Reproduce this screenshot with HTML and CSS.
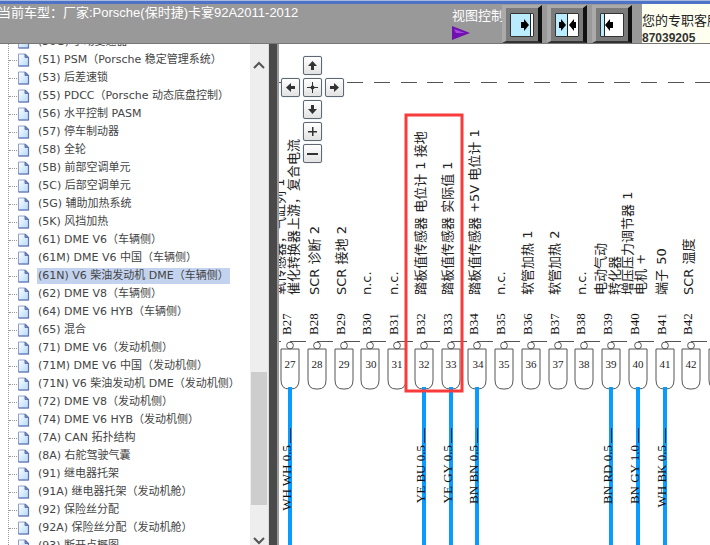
FILE: index.html
```html
<!DOCTYPE html>
<html lang="zh-CN">
<head>
<meta charset="utf-8">
<title>Porsche 92A 电路图</title>
<link rel="stylesheet" href="styles.css">
</head>
<body>
<svg class="defs" aria-hidden="true">
  <defs>
    <linearGradient id="paper" x1="0" y1="0" x2="1" y2="1">
      <stop offset="0" stop-color="#fff"/><stop offset="1" stop-color="#b4d8fa"/>
    </linearGradient>
    <symbol id="doc" viewBox="0 0 12 14">
      <path d="M1 1H8L11 4V13H1Z" fill="url(#paper)" stroke="#8fa0cc"/>
      <path d="M11 4V13H1" fill="none" stroke="#5f73b3" stroke-width="1.2"/>
      <path d="M7.500 1V4.500H11Z" fill="#7184bd" stroke="#6175b0"/>
    </symbol>
    <g id="pin">
      <path d="M-9 349H9V380Q9 389 1 389H-1Q-9 389 -9 380Z"/>
      <circle cy="345.500" r="3.400"/>
      <path d="M0 341.500H16"/>
    </g>
    <g id="wire">
      <path d="M0 387V560" stroke="#0a9bff" stroke-width="4"/>
      <path d="M0.500 428V443" stroke="#10304a" stroke-width="1"/>
    </g>
  </defs>
</svg>
<div class="app">
  <header class="topbar">
    <div class="vehicle">当前车型：厂家:Porsche(保时捷)卡宴92A2011-2012</div>
    <div class="view">
      <span>视图控制</span>
      <svg class="play" viewBox="0 0 18 14"><path d="M0 0L18 7L0 14Z" fill="#7110b0"/><path d="M2 3L13 7L4 7Z" fill="#a24bdc"/></svg>
    </div>
    <div class="modes">
      <button type="button" class="mode" aria-label="右移"><svg viewBox="0 0 24 24"><path d="M0 0H24V24H0Z" fill="#fff"/><path d="M0 0H20V24H0Z" fill="#b9ecff"/><path d="M20.500 0V24" stroke="#222"/><path d="M11 9H14V6L19 12L14 18V15H11Z"/><path d="M.5 .5H23.500V23.500H.5Z" fill="none" stroke="#333"/></svg></button>
      <button type="button" class="mode" aria-label="居中"><svg viewBox="0 0 24 24"><path d="M0 0H24V24H0Z" fill="#fff"/><path d="M0 0H12V24H0Z" fill="#b9ecff"/><path d="M12.500 0V24" stroke="#222"/><path d="M4 9H6V6L11 12L6 18V15H4ZM21 9H19V6L14 12L19 18V15H21Z"/><path d="M.5 .5H23.500V23.500H.5Z" fill="none" stroke="#333"/></svg></button>
      <button type="button" class="mode" aria-label="左移"><svg viewBox="0 0 24 24"><path d="M0 0H24V24H0Z" fill="#fff"/><path d="M0 0H4V24H0Z" fill="#b9ecff"/><path d="M4.500 0V24" stroke="#222"/><path d="M13 9H10V6L5 12L10 18V15H13Z"/><path d="M.5 .5H23.500V23.500H.5Z" fill="none" stroke="#333"/></svg></button>
    </div>
    <div class="service"><span>您的专职客服</span><b>87039205</b></div>
  </header>
  <main class="work">
    <nav class="tree">
      <ul>
        <li><svg><use href="#doc"/></svg><a href="#">(50G) 手动变速器</a></li>
        <li><svg><use href="#doc"/></svg><a href="#">(51) PSM（Porsche 稳定管理系统）</a></li>
        <li><svg><use href="#doc"/></svg><a href="#">(53) 后差速锁</a></li>
        <li><svg><use href="#doc"/></svg><a href="#">(55) PDCC（Porsche 动态底盘控制）</a></li>
        <li><svg><use href="#doc"/></svg><a href="#">(56) 水平控制 PASM</a></li>
        <li><svg><use href="#doc"/></svg><a href="#">(57) 停车制动器</a></li>
        <li><svg><use href="#doc"/></svg><a href="#">(58) 全轮</a></li>
        <li><svg><use href="#doc"/></svg><a href="#">(5B) 前部空调单元</a></li>
        <li><svg><use href="#doc"/></svg><a href="#">(5C) 后部空调单元</a></li>
        <li><svg><use href="#doc"/></svg><a href="#">(5G) 辅助加热系统</a></li>
        <li><svg><use href="#doc"/></svg><a href="#">(5K) 风挡加热</a></li>
        <li><svg><use href="#doc"/></svg><a href="#">(61) DME V6（车辆侧）</a></li>
        <li><svg><use href="#doc"/></svg><a href="#">(61M) DME V6 中国（车辆侧）</a></li>
        <li><svg><use href="#doc"/></svg><a href="#" class="selected">(61N) V6 柴油发动机 DME（车辆侧）</a></li>
        <li><svg><use href="#doc"/></svg><a href="#">(62) DME V8（车辆侧）</a></li>
        <li><svg><use href="#doc"/></svg><a href="#">(64) DME V6 HYB（车辆侧）</a></li>
        <li><svg><use href="#doc"/></svg><a href="#">(65) 混合</a></li>
        <li><svg><use href="#doc"/></svg><a href="#">(71) DME V6（发动机侧）</a></li>
        <li><svg><use href="#doc"/></svg><a href="#">(71M) DME V6 中国（发动机侧）</a></li>
        <li><svg><use href="#doc"/></svg><a href="#">(71N) V6 柴油发动机 DME（发动机侧）</a></li>
        <li><svg><use href="#doc"/></svg><a href="#">(72) DME V8（发动机侧）</a></li>
        <li><svg><use href="#doc"/></svg><a href="#">(74) DME V6 HYB（发动机侧）</a></li>
        <li><svg><use href="#doc"/></svg><a href="#">(7A) CAN 拓扑结构</a></li>
        <li><svg><use href="#doc"/></svg><a href="#">(8A) 右舵驾驶气囊</a></li>
        <li><svg><use href="#doc"/></svg><a href="#">(91) 继电器托架</a></li>
        <li><svg><use href="#doc"/></svg><a href="#">(91A) 继电器托架（发动机舱）</a></li>
        <li><svg><use href="#doc"/></svg><a href="#">(92) 保险丝分配</a></li>
        <li><svg><use href="#doc"/></svg><a href="#">(92A) 保险丝分配（发动机舱）</a></li>
        <li><svg><use href="#doc"/></svg><a href="#">(93) 断开点概图</a></li>
      </ul>
    </nav>
    <div class="scroll" aria-hidden="true">
      <svg viewBox="0 0 12 8"><path d="M1 7L6 2L11 7"/></svg>
      <span class="before"></span><span class="thumb"></span><span class="after"></span>
      <svg viewBox="0 0 12 8"><path d="M1 1L6 6L11 1"/></svg>
    </div>
    <div class="splitter"></div>
    <section class="canvas">
      <svg class="diagram" viewBox="279 44 431 501" role="img" aria-label="电路图">
        <path d="M279 82.500H284M347 82.500h16m11 0h16m11 0h16m10 0h16m11 0h16m11 0h16m11 0h16m10 0h16m11 0h16m11 0h16m10 0h16m11 0h16m11 0h16m11 0h16" stroke="#555" fill="none"/>
        <g class="pins">
          <path d="M279 341.500H281"/>
          <use href="#pin" x="290"/><use href="#pin" x="317"/><use href="#pin" x="344"/><use href="#pin" x="370"/><use href="#pin" x="397"/><use href="#pin" x="424"/><use href="#pin" x="451"/><use href="#pin" x="477"/><use href="#pin" x="504"/><use href="#pin" x="531"/><use href="#pin" x="558"/><use href="#pin" x="584"/><use href="#pin" x="611"/><use href="#pin" x="638"/><use href="#pin" x="665"/><use href="#pin" x="691"/><use href="#pin" x="718"/>
        </g>
        <use href="#wire" x="290"/><use href="#wire" x="424"/><use href="#wire" x="451"/><use href="#wire" x="477"/><use href="#wire" x="611"/><use href="#wire" x="638"/><use href="#wire" x="665"/>
        <g class="numbers">
          <text x="290" y="368">27</text><text x="317" y="368">28</text><text x="344" y="368">29</text><text x="371" y="368">30</text><text x="397" y="368">31</text><text x="424" y="368">32</text><text x="451" y="368">33</text><text x="478" y="368">34</text><text x="504" y="368">35</text><text x="531" y="368">36</text><text x="558" y="368">37</text><text x="584" y="368">38</text><text x="611" y="368">39</text><text x="638" y="368">40</text><text x="665" y="368">41</text><text x="691" y="368">42</text>
        </g>
        <g class="codes" transform="rotate(-90)">
          <text x="-335" y="291">B27</text><text x="-335" y="318">B28</text><text x="-335" y="345">B29</text><text x="-335" y="371">B30</text><text x="-335" y="398">B31</text><text x="-335" y="425">B32</text><text x="-335" y="452">B33</text><text x="-335" y="478">B34</text><text x="-335" y="505">B35</text><text x="-335" y="532">B36</text><text x="-335" y="559">B37</text><text x="-335" y="585">B38</text><text x="-335" y="612">B39</text><text x="-335" y="639">B40</text><text x="-335" y="666">B41</text><text x="-335" y="692">B42</text>
        </g>
        <g class="labels" transform="rotate(-90)">
          <text x="-295" y="284">氧传感器，气缸列 1</text>
          <text x="-295" y="298">催化转换器上游，复合电流</text>
          <text x="-295" y="319">SCR 诊断 2</text>
          <text x="-295" y="346">SCR 接地 2</text>
          <text x="-295" y="371">n.c.</text>
          <text x="-295" y="398">n.c.</text>
          <text x="-295" y="425">踏板值传感器 电位计 1 接地</text>
          <text x="-295" y="452">踏板值传感器 实际值 1</text>
          <text x="-295" y="479">踏板值传感器 +5V 电位计 1</text>
          <text x="-295" y="505">n.c.</text>
          <text x="-295" y="532">软管加热 1</text>
          <text x="-295" y="559">软管加热 2</text>
          <text x="-295" y="586">n.c.</text>
          <text x="-295" y="605">电动气动</text>
          <text x="-295" y="619">转化器</text>
          <text x="-295" y="632">增压压力调节器 1</text>
          <text x="-295" y="645">电机 +</text>
          <text x="-295" y="666">端子 50</text>
          <text x="-295" y="693">SCR 温度</text>
        </g>
        <g class="codes gauges" transform="rotate(-90)">
          <text x="-445" y="291">WH WH 0.5</text><text x="-445" y="425">YE BU 0.5</text><text x="-445" y="452">YE GY 0.5</text><text x="-445" y="478">BN BN 0.5</text><text x="-445" y="612">BN RD 0.5</text><text x="-445" y="639">BN GY 1.0</text><text x="-445" y="666">WH BK 0.5</text>
        </g>
        <rect x="406" y="115" width="56" height="276" fill="none" stroke="#f83b3b" stroke-width="3"/>
      </svg>
      <div class="pan">
        <button type="button" class="up" aria-label="上"><svg viewBox="0 0 17 17"><path d="M8.500 4L13 9H10V13H7V9H4Z"/></svg></button>
        <button type="button" class="left" aria-label="左"><svg viewBox="0 0 17 17"><path d="M4 8.500L9 4V7H13V10H9V13Z"/></svg></button>
        <button type="button" class="mid" aria-label="居中"><svg viewBox="0 0 17 17"><path d="M8 3H9V8H14V9H9V14H8V9H3V8H8Z"/><circle cx="8.500" cy="8.500" r="2"/></svg></button>
        <button type="button" class="right" aria-label="右"><svg viewBox="0 0 17 17"><path d="M13 8.500L8 4V7H4V10H8V13Z"/></svg></button>
        <button type="button" class="down" aria-label="下"><svg viewBox="0 0 17 17"><path d="M8.500 13L13 8H10V4H7V8H4Z"/></svg></button>
        <button type="button" class="in" aria-label="放大"><svg viewBox="0 0 17 17"><path d="M8 4H9.500V8H13V9.500H9.500V13H8V9.500H4V8H8Z"/></svg></button>
        <button type="button" class="out" aria-label="缩小"><svg viewBox="0 0 17 17"><path d="M3 8H14V10H3Z"/></svg></button>
      </div>
    </section>
  </main>
</div>
</body>
</html>
```
FILE: styles.css
```css
* { box-sizing: border-box; }
body {
  margin: 0;
  background: #fff;
  color: #333;
  font-family: "DejaVu Sans", "Noto Sans CJK SC", sans-serif;
}
svg { display: block; }
button { padding: 0; font: inherit; }
.defs { position: absolute; width: 0; height: 0; }
.app {
  display: flex;
  flex-direction: column;
  height: 100vh;
  overflow: hidden;
  border-top: 1px solid #a9b9de;
}

.topbar {
  display: flex;
  flex: none;
  height: 43px;
  overflow: hidden;
  background: #999;
  border-top: 3px solid #4d72c8;
  border-bottom: 1px solid #777;
  color: #fff;
  font: 13px/18px "Liberation Sans", "Noto Sans CJK SC", sans-serif;
  white-space: nowrap;
}
.vehicle { flex: 1; margin-left: -2px; }
.view { padding-top: 3px; width: 50px; }
.play { width: 18px; height: 14px; margin-top: 1px; }
.modes { display: flex; gap: 5px; padding: 1px 10px 0 0; }
.mode {
  display: flex;
  align-items: center;
  justify-content: center;
  width: 40px;
  height: 38px;
  background: #7b7b7b;
  border: solid;
  border-width: 3px 4px 2px 4px;
  border-color: #aaa #111 #333 #aaa;
}
.mode svg { width: 24px; height: 24px; }
.service {
  display: flex;
  flex-direction: column;
  width: 68px;
  padding-top: 8px;
  background: #fffff0;
  color: #222;
}
.service b { color: #333; font-size: 12px; line-height: 16px; }

.work { display: flex; flex: 1; min-height: 0; }
.tree { flex: none; width: 250px; overflow: hidden; }
.tree ul {
  list-style: none;
  margin: -11px 0 0 8px;
  padding: 0;
  border-left: 1px dotted #999;
}
.tree li { display: flex; align-items: center; height: 18px; }
.tree li::before { content: ""; width: 8px; border-top: 1px dotted #999; }
.tree li svg { width: 13px; height: 14px; }
.tree a {
  margin-left: 7px;
  padding: 0 1px;
  color: #444;
  font-size: 11px;
  line-height: 16px;
  text-decoration: none;
  white-space: nowrap;
}
.tree .selected { background: #c3d3ef; }

.scroll {
  display: flex;
  flex: none;
  flex-direction: column;
  align-items: center;
  width: 18px;
  padding-top: 17px;
  background: #eee;
}
.scroll svg { flex: none; width: 12px; height: 8px; }
.scroll path { fill: none; stroke: #555; stroke-width: 2; }
.scroll .before { flex: 303; }
.scroll .thumb { flex: 133; width: 16px; background: #cdcdcd; }
.scroll .after { flex: 32; }
.splitter {
  flex: none;
  width: 11px;
  background: #4a4a4a;
  border: solid;
  border-width: 0 2px 0 1px;
  border-color: #999 #999 #999 #ddd;
}

.canvas { position: relative; flex: 1; min-width: 0; overflow: hidden; }
.diagram { width: 100%; }
.pins { fill: none; stroke: #555; }
.numbers { font: 11px "Liberation Serif", serif; fill: #222; text-anchor: middle; }
.codes { font: 13px "Liberation Serif", serif; fill: #111; }
.gauges { text-anchor: end; }
.labels { font: 13px "DejaVu Sans", "Noto Sans CJK SC", sans-serif; fill: #222; }

.pan {
  position: absolute;
  left: 2px;
  top: 12px;
  display: grid;
  grid-template-columns: repeat(3, 19px);
  grid-template-areas: ". up ." "left mid right" ". down ." ". in ." ". out .";
  gap: 3px;
}
.pan button {
  width: 19px;
  height: 19px;
  background: linear-gradient(#fff, #e2e2e2);
  border: 1px solid #5f6870;
  border-radius: 2px;
  box-shadow: 0 0 1px #7fa6c4;
}
.pan svg { width: 17px; height: 17px; fill: #333; }
.up { grid-area: up; }
.left { grid-area: left; }
.mid { grid-area: mid; }
.right { grid-area: right; }
.down { grid-area: down; }
.in { grid-area: in; }
.out { grid-area: out; }
```
